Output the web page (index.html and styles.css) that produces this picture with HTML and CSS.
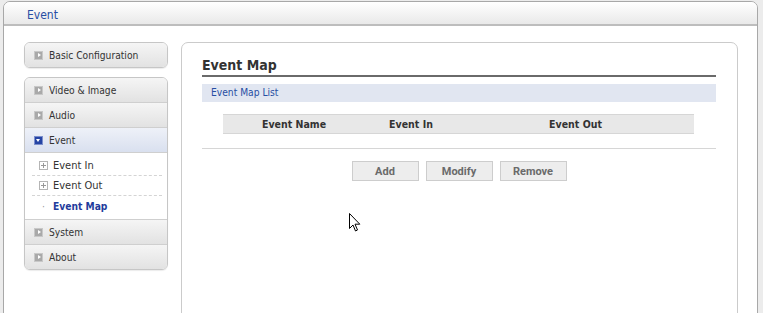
FILE: index.html
```html
<!DOCTYPE html>
<html lang="en">
<head>
    <meta charset="UTF-8">
    <title>Event</title>
    <link rel="stylesheet" href="styles.css">
</head>
<body>
    <div class="frame">
        <div class="frame-header">Event</div>
        <div class="frame-body">
            <div class="sidebar">
                <div class="menu-group">
                    <div class="menu-item"><span class="arrow"></span>Basic Configuration</div>
                </div>
                <div class="menu-group">
                    <div class="menu-item"><span class="arrow"></span>Video &amp; Image</div>
                    <div class="menu-item"><span class="arrow"></span>Audio</div>
                    <div class="menu-item open"><span class="arrow down"></span>Event</div>
                    <ul class="submenu">
                        <li><span class="plus"></span>Event In</li>
                        <li><span class="plus"></span>Event Out</li>
                        <li class="current"><span class="dot">·</span>Event Map</li>
                    </ul>
                    <div class="menu-item"><span class="arrow"></span>System</div>
                    <div class="menu-item"><span class="arrow"></span>About</div>
                </div>
            </div>
            <div class="panel">
                <h2 class="panel-title">Event Map</h2>
                <div class="section-bar">Event Map List</div>
                <table class="map-table">
                    <tr>
                        <th class="col-name">Event Name</th>
                        <th class="col-in">Event In</th>
                        <th class="col-out">Event Out</th>
                    </tr>
                </table>
                <div class="rule"></div>
                <div class="buttons">
                    <button class="btn">Add</button>
                    <button class="btn">Modify</button>
                    <button class="btn">Remove</button>
                </div>
                <svg class="cursor" width="12" height="19" viewBox="0 0 12 19">
                    <path d="M0.5 0.5 L0.5 15.5 L4 12 L6.5 18 L8.5 17 L6 11.2 L10.8 11.2 Z" fill="#fff" stroke="#000" stroke-width="1"/>
                </svg>
            </div>
        </div>
    </div>
</body>
</html>
```

FILE: styles.css
```css
* {
    margin: 0;
    padding: 0;
    box-sizing: border-box;
}

body {
    background: #ececec;
    font-family: "DejaVu Sans Condensed", "DejaVu Sans", Verdana, sans-serif;
    font-size: 10.5px;
    color: #333;
    height: 313px;
    overflow: hidden;
}

.frame {
    margin: 1px 0 0 3px;
    width: 755px;
    height: 320px;
    background: #fff;
    border: 1px solid #a8a8a8;
    border-radius: 7px 7px 0 0;
}

.frame-header {
    height: 24px;
    padding: 6px 0 0 23px;
    background: linear-gradient(#ffffff, #e9e9e9);
    border-bottom: 2px solid #bdbdbd;
    border-radius: 6px 6px 0 0;
    color: #274ea3;
    font-size: 12px;
}

.frame-body {
    display: flex;
    gap: 13px;
    padding: 16px 0 0 20px;
}

.sidebar {
    width: 144px;
    display: flex;
    flex-direction: column;
    gap: 9px;
}

.menu-group {
    border: 1px solid #c6c6c6;
    border-radius: 6px;
    overflow: hidden;
    box-shadow: 0 1px 1px rgba(0, 0, 0, 0.08);
}

.menu-item {
    height: 25px;
    display: flex;
    align-items: center;
    padding-left: 9px;
    background: linear-gradient(#f5f5f5, #e2e2e2);
    border-top: 1px solid #cfcfcf;
    color: #333;
    font-size: 10.2px;
}

.menu-item:first-child {
    border-top: none;
    height: 24px;
}

.menu-item.open {
    background: linear-gradient(#eef1f8, #d9e0ef);
}

.arrow {
    width: 9px;
    height: 9px;
    margin-right: 6px;
    background: #a9a9a9;
    border: 1px solid #c8c8c8;
    position: relative;
}

.arrow::after {
    content: "";
    position: absolute;
    left: 3px;
    top: 1px;
    border-left: 3px solid #fff;
    border-top: 2.5px solid transparent;
    border-bottom: 2.5px solid transparent;
}

.arrow.down {
    background: #2544a4;
    border-color: #7c8fcc;
}

.arrow.down::after {
    left: 1px;
    top: 2px;
    border-top: 3px solid #fff;
    border-left: 2.5px solid transparent;
    border-right: 2.5px solid transparent;
    border-bottom: none;
}

.submenu {
    list-style: none;
    padding: 3px 5px 3px 7px;
    border-top: 1px solid #cfcfcf;
    background: #fff;
    font-size: 11px;
}

.submenu li {
    height: 20px;
    display: flex;
    align-items: center;
    padding-left: 7px;
    color: #333;
    border-bottom: 1px dashed #d4d4d4;
}

.submenu li:last-child {
    border-bottom: none;
}

.plus {
    width: 9px;
    height: 9px;
    margin-right: 5px;
    border: 1px solid #b5b5b5;
    position: relative;
}

.plus::before,
.plus::after {
    content: "";
    position: absolute;
    background: #999;
}

.plus::before {
    left: 1px;
    top: 3px;
    width: 5px;
    height: 1px;
}

.plus::after {
    left: 3px;
    top: 1px;
    width: 1px;
    height: 5px;
}

.submenu li.current {
    color: #1f3c9c;
    font-weight: bold;
    font-size: 10.2px;
}

.dot {
    width: 9px;
    margin-right: 5px;
    color: #999;
    font-weight: normal;
    text-align: center;
}

.panel {
    position: relative;
    width: 557px;
    height: 300px;
    border: 1px solid #cbcbcb;
    border-radius: 7px 7px 0 0;
    padding: 14px 21px 0 20px;
}

.panel-title {
    font-size: 14px;
    font-weight: bold;
    color: #333;
    padding-bottom: 2px;
    border-bottom: 2px solid #6a6a6a;
}

.section-bar {
    margin-top: 7px;
    height: 18px;
    padding: 3px 0 0 9px;
    background: #e1e6f1;
    color: #274ea3;
    font-size: 10.2px;
}

.map-table {
    margin: 12px 0 0 21px;
    width: 471px;
    border-collapse: collapse;
}

.map-table th {
    height: 19px;
    background: #e8e8e8;
    border: 1px solid #d6d6d6;
    border-left: none;
    border-right: none;
    font-weight: bold;
    color: #333;
}

.col-name {
    width: 142px;
}

.col-in {
    width: 92px;
}

.rule {
    margin-top: 14px;
    border-top: 1px solid #d6d6d6;
}

.buttons {
    display: flex;
    justify-content: center;
    gap: 7px;
    margin-top: 12px;
}

.btn {
    width: 67px;
    height: 20px;
    background: #ededed;
    border: 1px solid #cdcdcd;
    font-family: Roboto, Arial, sans-serif;
    font-size: 11px;
    font-weight: bold;
    color: #6a6a6a;
}

.cursor {
    position: absolute;
    left: 167px;
    top: 170px;
}
```
